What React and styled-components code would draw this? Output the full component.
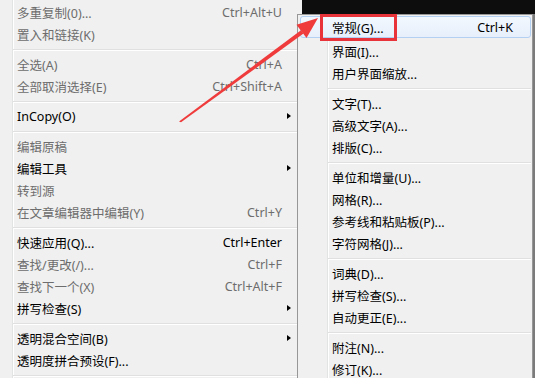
import React from "react";
import styled, { createGlobalStyle } from "styled-components";

const GlobalStyle = createGlobalStyle`
  html, body {
    margin: 0;
    padding: 0;
    background: #f0f0f0;
    overflow: hidden;
  }
  body {
    font-family: "Noto Sans", "Noto Sans CJK SC", sans-serif;
    font-size: 12.5px;
  }
`;

const Page = styled.div`
  position: relative;
  display: flex;
  width: 535px;
  height: 378px;
  overflow: hidden;
`;

const MainMenu = styled.div`
  width: 297px;
  padding-top: 1px;
  flex-shrink: 0;
  background: linear-gradient(
    to right,
    #f0f0f0 12px,
    #e2e3e3 12px,
    #e2e3e3 13px,
    #ffffff 13px,
    #ffffff 14px,
    #f0f0f0 14px
  );
`;

const RightCol = styled.div`
  width: 238px;
  display: flex;
  flex-direction: column;
`;

const TopStrip = styled.div`
  height: 14px;
  margin-left: 5px;
  background: #0d0d0d;
  flex-shrink: 0;
`;

const SubMenu = styled.div`
  flex: 1;
  width: 236px;
  box-sizing: border-box;
  border: 1px solid #979797;
  border-bottom: none;
  box-shadow: 2px 0 0 #7b7b7b;
  padding: 1px 1px 0 2px;
  background: linear-gradient(
    to right,
    #f0f0f0 29px,
    #e2e3e3 29px,
    #e2e3e3 30px,
    #ffffff 30px,
    #ffffff 31px,
    #f0f0f0 31px
  );
`;

const Row = styled.div`
  display: flex;
  align-items: center;
  height: 22px;
  box-sizing: border-box;
  padding-left: ${(p) => p.$indent}px;
  color: ${(p) => (p.$disabled ? "#6d6d6d" : "#000")};
  white-space: nowrap;
`;

const SubRow = styled(Row)`
  padding-right: 17px;
  border: 1px solid transparent;
  border-radius: 3px;
  ${(p) =>
    p.$active &&
    `
    border-color: #b3cff2;
    background: linear-gradient(#f3f8fe, #e6effb);
    margin-bottom: 2px;
  `}
`;

const Label = styled.span`
  flex: 1;
`;

const Shortcut = styled.span`
  text-align: right;
`;

const ArrowSlot = styled.span`
  width: 15px;
  height: 22px;
  display: flex;
  align-items: center;
  flex-shrink: 0;
`;

const Arrow = styled.span`
  margin-left: 5px;
  width: 0;
  height: 0;
  border-top: 3.5px solid transparent;
  border-bottom: 3.5px solid transparent;
  border-left: 4px solid #000;
`;

const Separator = styled.div`
  height: 8px;
  margin-left: ${(p) => p.$indent}px;
  box-sizing: border-box;
  padding-top: 4px;
  &::before {
    content: "";
    display: block;
    height: 1px;
    background: #e0e0e0;
    border-bottom: 1px solid #ffffff;
  }
`;

const Overlay = styled.svg`
  position: absolute;
  top: 0;
  left: 0;
  pointer-events: none;
`;

const SEP = { sep: true };

const mainItems = [
  { label: "多重复制(0)...", sc: "Ctrl+Alt+U", dis: true },
  { label: "置入和链接(K)", dis: true },
  SEP,
  { label: "全选(A)", sc: "Ctrl+A", dis: true },
  { label: "全部取消选择(E)", sc: "Ctrl+Shift+A", dis: true },
  SEP,
  { label: "InCopy(O)", sub: true },
  SEP,
  { label: "编辑原稿", dis: true },
  { label: "编辑工具", sub: true },
  { label: "转到源", dis: true },
  { label: "在文章编辑器中编辑(Y)", sc: "Ctrl+Y", dis: true },
  SEP,
  { label: "快速应用(Q)...", sc: "Ctrl+Enter" },
  { label: "查找/更改(/)...", sc: "Ctrl+F", dis: true },
  { label: "查找下一个(X)", sc: "Ctrl+Alt+F", dis: true },
  { label: "拼写检查(S)", sub: true },
  SEP,
  { label: "透明混合空间(B)", sub: true },
  { label: "透明度拼合预设(F)..." },
  SEP,
];

const subItems = [
  { label: "常规(G)...", sc: "Ctrl+K", active: true },
  { label: "界面(I)..." },
  { label: "用户界面缩放..." },
  SEP,
  { label: "文字(T)..." },
  { label: "高级文字(A)..." },
  { label: "排版(C)..." },
  SEP,
  { label: "单位和增量(U)..." },
  { label: "网格(R)..." },
  { label: "参考线和粘贴板(P)..." },
  { label: "字符网格(J)..." },
  SEP,
  { label: "词典(D)..." },
  { label: "拼写检查(S)..." },
  { label: "自动更正(E)..." },
  SEP,
  { label: "附注(N)..." },
  { label: "修订(K)..." },
];

const App = () => {
  return (
    <>
      <GlobalStyle />
      <Page>
        <MainMenu>
          {mainItems.map((item, i) =>
            item.sep ? (
              <Separator key={i} $indent={13} />
            ) : (
              <Row key={i} $indent={17} $disabled={item.dis}>
                <Label>{item.label}</Label>
                {item.sc && <Shortcut>{item.sc}</Shortcut>}
                <ArrowSlot>{item.sub && <Arrow />}</ArrowSlot>
              </Row>
            )
          )}
        </MainMenu>
        <RightCol>
          <TopStrip />
          <SubMenu>
            {subItems.map((item, i) =>
              item.sep ? (
                <Separator key={i} $indent={28} />
              ) : (
                <SubRow key={i} $indent={31} $active={item.active}>
                  <Label>{item.label}</Label>
                  {item.sc && <Shortcut>{item.sc}</Shortcut>}
                </SubRow>
              )
            )}
          </SubMenu>
        </RightCol>
        <Overlay width="535" height="378" viewBox="0 0 535 378">
          <rect
            x="321.5"
            y="15.5"
            width="74"
            height="24"
            fill="none"
            stroke="#e8333a"
            strokeWidth="3"
          />
          <polygon
            points="179,121.5 181,122.3 303.5,33.5 301,30.2"
            fill="#ef3b3b"
          />
          <polygon points="318,18 296.5,24.8 306.5,38" fill="#ef3b3b" />
        </Overlay>
      </Page>
    </>
  );
};

export default App;
